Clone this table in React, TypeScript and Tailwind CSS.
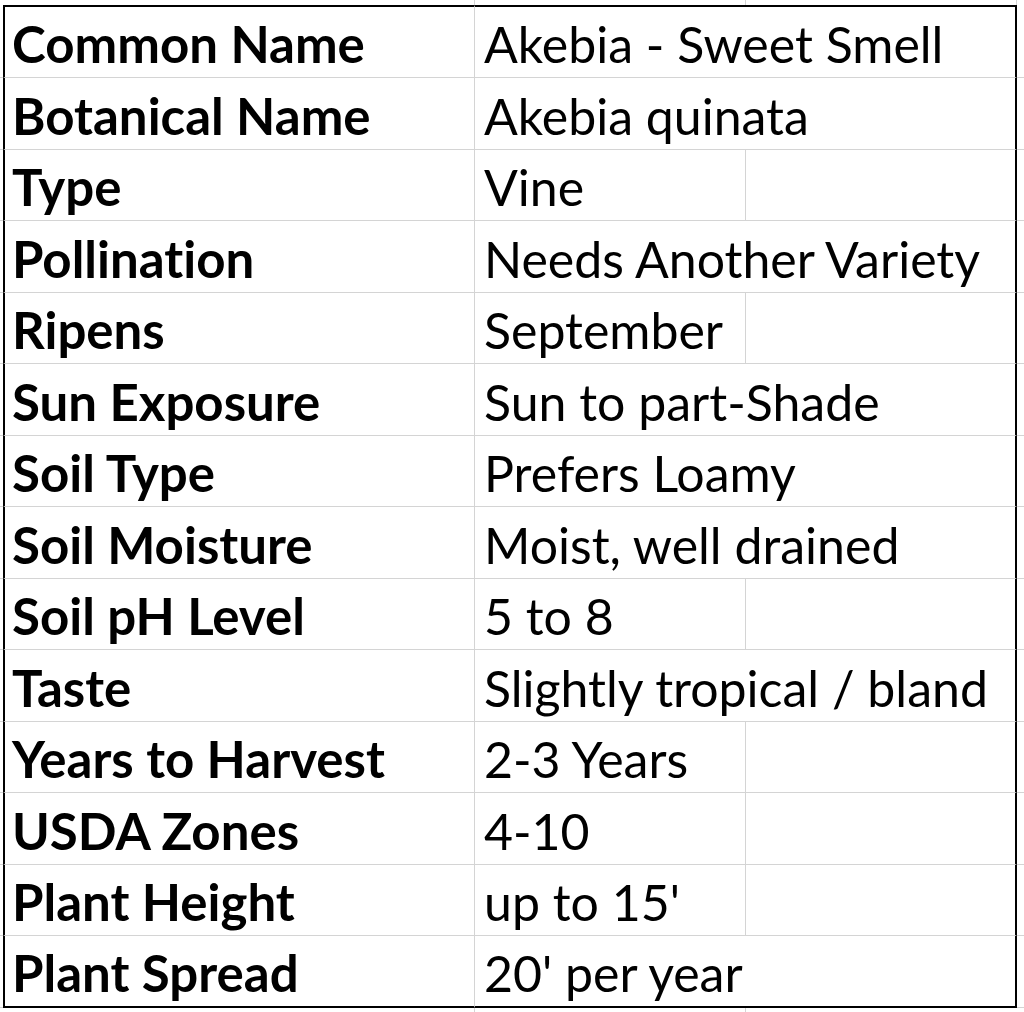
type Row = {
  label: string;
  value: string;
  wide: boolean;
  h: string;
};

// Excel-style sheet: value text that runs past its column hides the next gridline
const rows: Row[] = [
  { label: 'Common Name', value: 'Akebia - Sweet Smell', wide: true, h: 'h-[73px]' },
  { label: 'Botanical Name', value: 'Akebia quinata', wide: true, h: 'h-[72px]' },
  { label: 'Type', value: 'Vine', wide: false, h: 'h-[71px]' },
  { label: 'Pollination', value: 'Needs Another Variety', wide: true, h: 'h-[72px]' },
  { label: 'Ripens', value: 'September', wide: false, h: 'h-[71px]' },
  { label: 'Sun Exposure', value: 'Sun to part-Shade', wide: true, h: 'h-[72px]' },
  { label: 'Soil Type', value: 'Prefers Loamy', wide: true, h: 'h-[71px]' },
  { label: 'Soil Moisture', value: 'Moist, well drained', wide: true, h: 'h-[72px]' },
  { label: 'Soil pH Level', value: '5 to 8', wide: false, h: 'h-[71px]' },
  { label: 'Taste', value: 'Slightly tropical / bland', wide: true, h: 'h-[72px]' },
  { label: 'Years to Harvest', value: '2-3 Years', wide: false, h: 'h-[71px]' },
  { label: 'USDA Zones', value: '4-10', wide: false, h: 'h-[72px]' },
  { label: 'Plant Height', value: "up to 15'", wide: false, h: 'h-[71px]' },
  { label: 'Plant Spread', value: "20' per year", wide: true, h: 'h-[72px]' },
];

const font = "font-['Lato',sans-serif] [font-variant-ligatures:none]";

export default function App() {
  return (
    <div className={`w-[1024px] h-[1012px] overflow-hidden bg-white text-black ${font}`}>
      {/* strip above the table */}
      <div className="flex h-[5px]">
        <div className="w-[3px] shrink-0" />
        <div className="w-[472px] shrink-0 border-r border-[#d4d4d4]" />
        <div className="w-[271px] shrink-0 border-r border-[#d4d4d4]" />
        <div className="w-[271px] shrink-0 border-r border-[#d4d4d4]" />
        <div className="flex-1" />
      </div>

      {rows.map((row, i) => {
        const first = i === 0;
        const last = i === rows.length - 1;
        const edge = `${first ? 'border-t-2 border-t-black' : ''} ${
          last ? 'border-b-2 border-b-black' : 'border-b border-b-[#d4d4d4]'
        }`;
        return (
          <div key={row.label} className={`flex ${row.h}`}>
            <div className="w-[3px] shrink-0 border-b border-[#d4d4d4]" />
            <div
              className={`w-[472px] shrink-0 flex items-end pl-[7px] pb-[3px] border-l-2 border-l-black border-r border-r-[#d4d4d4] ${edge}`}
            >
              <span className="text-[51px] leading-[60px] font-bold whitespace-nowrap">{row.label}</span>
            </div>
            {row.wide ? (
              <div className={`w-[542px] shrink-0 flex items-end pl-[9px] pb-[3px] border-r-2 border-r-black ${edge}`}>
                <span className="text-[50px] leading-[60px] whitespace-nowrap">{row.value}</span>
              </div>
            ) : (
              <>
                <div
                  className={`w-[271px] shrink-0 flex items-end pl-[9px] pb-[3px] border-r border-r-[#d4d4d4] ${edge}`}
                >
                  <span className="text-[50px] leading-[60px] whitespace-nowrap">{row.value}</span>
                </div>
                <div className={`w-[271px] shrink-0 border-r-2 border-r-black ${edge}`} />
              </>
            )}
            <div className="flex-1 border-b border-[#d4d4d4]" />
          </div>
        );
      })}

      {/* strip below the table */}
      <div className="flex h-[4px]">
        <div className="w-[3px] shrink-0" />
        <div className="w-[472px] shrink-0 border-r border-[#d4d4d4]" />
        <div className="w-[271px] shrink-0 border-r border-[#d4d4d4]" />
        <div className="w-[271px] shrink-0" />
        <div className="flex-1" />
      </div>
    </div>
  );
}
